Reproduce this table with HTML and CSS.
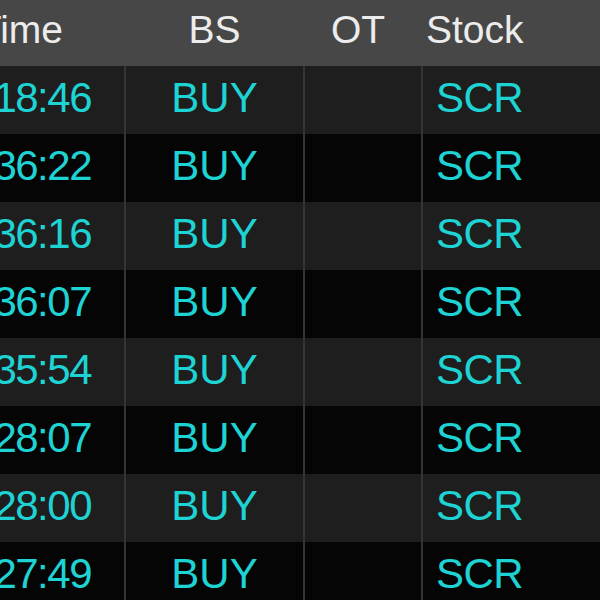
FILE: index.html
```html
<!DOCTYPE html>
<html>
<head>
<meta charset="utf-8">
<link rel="stylesheet" href="styles.css">
</head>
<body>
<div class="viewport">
<table class="grid">
  <thead>
    <tr>
      <th class="c-time">Time</th>
      <th class="c-bs">BS</th>
      <th class="c-ot">OT</th>
      <th class="c-stock">Stock</th>
    </tr>
  </thead>
  <tbody>
    <tr><td class="c-time">12:18:46</td><td class="c-bs">BUY</td><td class="c-ot"></td><td class="c-stock">SCR</td></tr>
    <tr><td class="c-time">12:36:22</td><td class="c-bs">BUY</td><td class="c-ot"></td><td class="c-stock">SCR</td></tr>
    <tr><td class="c-time">12:36:16</td><td class="c-bs">BUY</td><td class="c-ot"></td><td class="c-stock">SCR</td></tr>
    <tr><td class="c-time">12:36:07</td><td class="c-bs">BUY</td><td class="c-ot"></td><td class="c-stock">SCR</td></tr>
    <tr><td class="c-time">12:35:54</td><td class="c-bs">BUY</td><td class="c-ot"></td><td class="c-stock">SCR</td></tr>
    <tr><td class="c-time">12:28:07</td><td class="c-bs">BUY</td><td class="c-ot"></td><td class="c-stock">SCR</td></tr>
    <tr><td class="c-time">12:28:00</td><td class="c-bs">BUY</td><td class="c-ot"></td><td class="c-stock">SCR</td></tr>
    <tr><td class="c-time">12:27:49</td><td class="c-bs">BUY</td><td class="c-ot"></td><td class="c-stock">SCR</td></tr>
  </tbody>
</table>
</div>
</body>
</html>
```
FILE: styles.css
```css
html, body {
  margin: 0;
  padding: 0;
  background: #000;
  overflow: hidden;
}
.viewport {
  width: 600px;
  height: 600px;
  overflow: hidden;
  background: #000;
}
.grid {
  margin-left: -65px;
  border-collapse: collapse;
  table-layout: fixed;
  width: 720px;
  font-family: "Liberation Sans", Arial, sans-serif;
}
.grid th {
  height: 66px;
  padding: 0 0 6px 0;
  background: #474747;
  color: #ececec;
  font-size: 39px;
  font-weight: normal;
  box-sizing: border-box;
  white-space: nowrap;
}
.grid td {
  height: 68px;
  padding: 0 0 4px 0;
  color: #1ed3d3;
  font-size: 42px;
  box-sizing: border-box;
  white-space: nowrap;
  overflow: hidden;
}
.grid tbody tr:nth-child(odd) td { background: #1e1e1e; }
.grid tbody tr:nth-child(even) td { background: #050505; }
.grid td + td { border-left: 2px solid #353535; }

.c-time { width: 190px; }
.c-bs { width: 179px; }
.c-ot { width: 118px; }
.c-stock { width: 233px; }

th.c-time { text-align: right; padding-right: 62px; }
td.c-time { text-align: right; padding-right: 33px; letter-spacing: -1.5px; }
.c-bs { text-align: center; }
.c-ot { text-align: center; }
th.c-ot { padding-right: 10px; }
th.c-stock { text-align: left; padding-left: 4px; }
td.c-stock { text-align: left; padding-left: 13px; letter-spacing: -0.5px; }
```
